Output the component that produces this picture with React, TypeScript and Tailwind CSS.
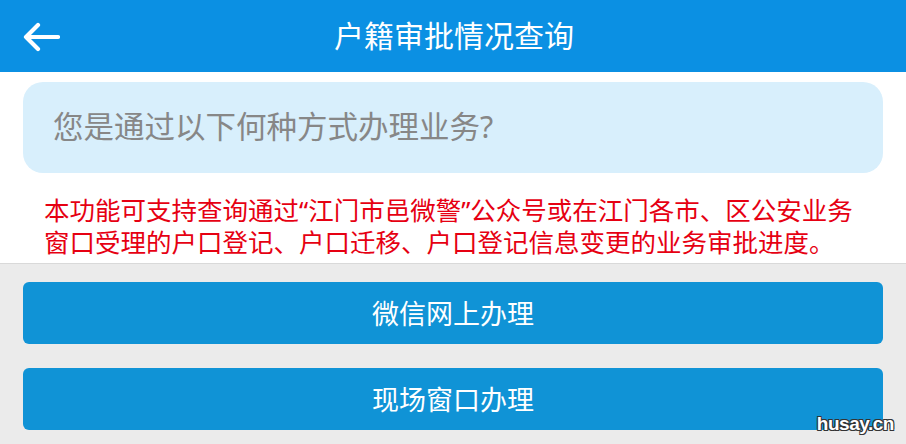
import React from "react";

const cjk = "font-['Noto_Sans','Noto_Sans_CJK_SC',sans-serif]";

export default function App() {
  const methods = ["微信网上办理", "现场窗口办理"];

  return (
    <div className={`relative w-[906px] h-[444px] overflow-hidden bg-white ${cjk}`}>
      {/* Top bar */}
      <header className="h-[72px] bg-[#0b90e3] flex items-center relative">
        <button className="absolute left-[22px] top-[20px] w-[38px] h-[34px] flex items-center justify-center">
          <svg width="38" height="30" viewBox="0 0 38 30" fill="none">
            <path
              d="M36 15H4M16 3L4 15l12 12"
              stroke="#fff"
              strokeWidth="4.2"
              strokeLinecap="round"
              strokeLinejoin="round"
            />
          </svg>
        </button>
        <h1 className="w-full text-center text-white text-[30px] leading-none pl-[2px]">
          户籍审批情况查询
        </h1>
      </header>

      {/* Question card */}
      <div className="mx-[23px] mt-[10px] h-[91px] rounded-[20px] bg-[#d8effc] flex items-center pl-[30px] pb-[2px]">
        <p className="text-[30.5px] text-[#878787] leading-none">您是通过以下何种方式办理业务?</p>
      </div>

      {/* Notice */}
      <p className="mt-[21px] px-[44px] text-[25.5px] leading-[32px] text-[#e60012] pb-[5px] whitespace-nowrap">
        本功能可支持查询通过“江门市邑微警”公众号或在江门各市、区公安业务
        <br />
        窗口受理的户口登记、户口迁移、户口登记信息变更的业务审批进度。
      </p>

      {/* Options */}
      <div className="border-t border-[#d9d9d9] bg-[#ebebeb] h-full px-[23px] pt-[18px] flex flex-col gap-[24px]">
        {methods.map((m) => (
          <button
            key={m}
            className="h-[62px] w-full rounded-[6px] bg-[#1093d6] text-white text-[27px] leading-none"
          >
            {m}
          </button>
        ))}
      </div>

      <span className="absolute right-[12px] bottom-[6px] text-white text-[19px] font-bold tracking-tight font-['Liberation_Sans',sans-serif] [text-shadow:_-1px_-1px_0_#333,1px_-1px_0_#333,-1px_1px_0_#333,1px_1px_0_#333]">
        husay.cn
      </span>
    </div>
  );
}
